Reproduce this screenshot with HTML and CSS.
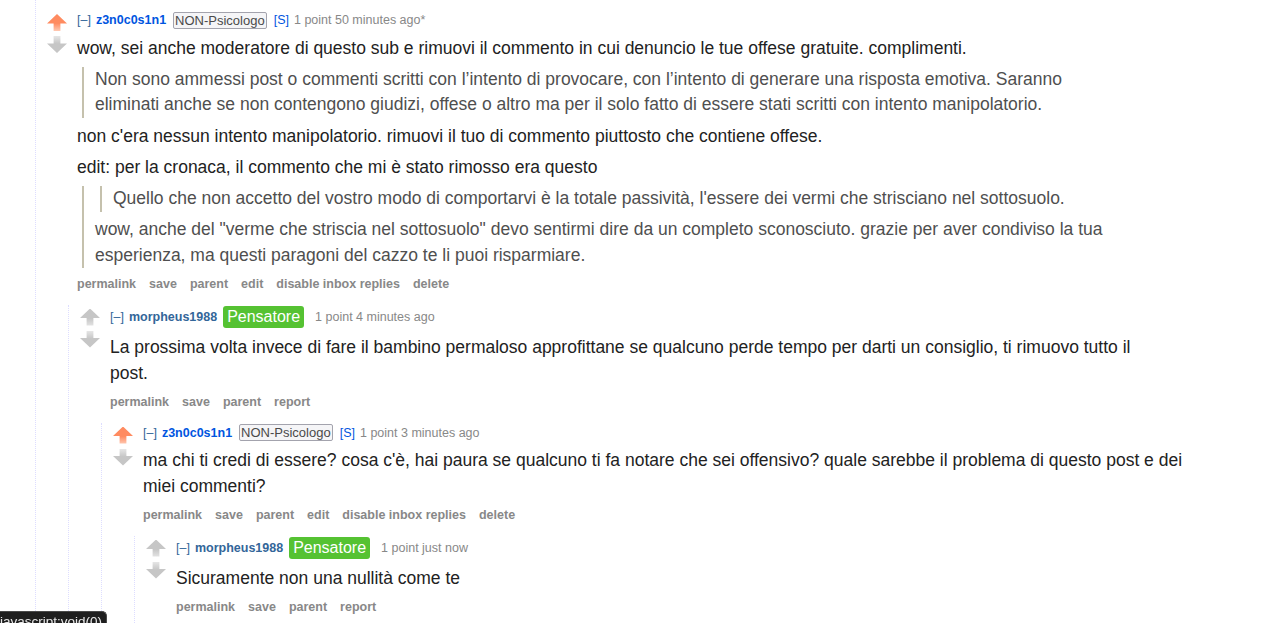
FILE: index.html
```html
<!DOCTYPE html>
<html lang="it">
<head>
<meta charset="utf-8">
<title>commenti</title>
<link rel="stylesheet" href="styles.css">
</head>
<body>
<div class="thread">
  <div class="comment">
    <div class="row">
      <div class="midcol"><div class="arrow up upmod"></div><div class="arrow down"></div></div>
      <div class="entry">
        <div class="tagline">
          <a class="expand">[–]</a>
          <a class="author submitter">z3n0c0s1n1</a>
          <span class="flair">NON-Psicologo</span>
          <a class="stag">[S]</a>
          <span class="meta">1 point 50 minutes ago*</span>
        </div>
        <div class="md">
          <p>wow, sei anche moderatore di questo sub e rimuovi il commento in cui denuncio le tue offese gratuite. complimenti.</p>
          <blockquote><p>Non sono ammessi post o commenti scritti con l’intento di provocare, con l’intento di generare una risposta emotiva. Saranno eliminati anche se non contengono giudizi, offese o altro ma per il solo fatto di essere stati scritti con intento manipolatorio.</p></blockquote>
          <p class="after-quote">non c'era nessun intento manipolatorio. rimuovi il tuo di commento piuttosto che contiene offese.</p>
          <p>edit: per la cronaca, il commento che mi è stato rimosso era questo</p>
          <blockquote>
            <blockquote><p>Quello che non accetto del vostro modo di comportarvi è la totale passività, l'essere dei vermi che strisciano nel sottosuolo.</p></blockquote>
            <p>wow, anche del "verme che striscia nel sottosuolo" devo sentirmi dire da un completo sconosciuto. grazie per aver condiviso la tua esperienza, ma questi paragoni del cazzo te li puoi risparmiare.</p>
          </blockquote>
        </div>
        <ul class="flat-list">
          <li>permalink</li><li>save</li><li>parent</li><li>edit</li><li>disable inbox replies</li><li>delete</li>
        </ul>
      </div>
    </div>
    <div class="child">
      <div class="comment">
        <div class="row">
          <div class="midcol"><div class="arrow up"></div><div class="arrow down"></div></div>
          <div class="entry">
            <div class="tagline tall">
              <a class="expand">[–]</a>
              <a class="author">morpheus1988</a>
              <span class="flair green">Pensatore</span>
              <span class="meta">1 point 4 minutes ago</span>
            </div>
            <div class="md">
              <p>La prossima volta invece di fare il bambino permaloso approfittane se qualcuno perde tempo per darti un consiglio, ti rimuovo tutto il post.</p>
            </div>
            <ul class="flat-list">
              <li>permalink</li><li>save</li><li>parent</li><li>report</li>
            </ul>
          </div>
        </div>
        <div class="child">
          <div class="comment">
            <div class="row">
              <div class="midcol"><div class="arrow up upmod"></div><div class="arrow down"></div></div>
              <div class="entry">
                <div class="tagline">
                  <a class="expand">[–]</a>
                  <a class="author submitter">z3n0c0s1n1</a>
                  <span class="flair">NON-Psicologo</span>
                  <a class="stag">[S]</a>
                  <span class="meta">1 point 3 minutes ago</span>
                </div>
                <div class="md">
                  <p>ma chi ti credi di essere? cosa c'è, hai paura se qualcuno ti fa notare che sei offensivo? quale sarebbe il problema di questo post e dei miei commenti?</p>
                </div>
                <ul class="flat-list">
                  <li>permalink</li><li>save</li><li>parent</li><li>edit</li><li>disable inbox replies</li><li>delete</li>
                </ul>
              </div>
            </div>
            <div class="child">
              <div class="comment">
                <div class="row">
                  <div class="midcol"><div class="arrow up"></div><div class="arrow down"></div></div>
                  <div class="entry">
                    <div class="tagline tall">
                      <a class="expand">[–]</a>
                      <a class="author">morpheus1988</a>
                      <span class="flair green">Pensatore</span>
                      <span class="meta">1 point just now</span>
                    </div>
                    <div class="md">
                      <p>Sicuramente non una nullità come te</p>
                    </div>
                    <ul class="flat-list">
                      <li>permalink</li><li>save</li><li>parent</li><li>report</li>
                    </ul>
                  </div>
                </div>
              </div>
            </div>
          </div>
        </div>
      </div>
    </div>
  </div>
</div>
<div class="status">javascript:void(0)</div>
</body>
</html>
```
FILE: styles.css
```css
html, body {
  margin: 0;
  padding: 0;
  background: #ffffff;
}
body {
  font-family: "Liberation Sans", Arial, Helvetica, sans-serif;
  color: #222222;
  overflow: hidden;
}
.thread {
  margin-left: 35px;
  border-left: 1px dotted #ddddff;
  padding-top: 10px;
  padding-bottom: 20px;
  min-height: 100vh;
  box-sizing: border-box;
}
.comment {
  padding-left: 11px;
}
.row {
  display: flex;
  gap: 10px;
}
.midcol {
  width: 20px;
  flex: none;
  padding-top: 4px;
  display: flex;
  flex-direction: column;
  gap: 5px;
}
.arrow {
  width: 20px;
  height: 17px;
}
.arrow.up {
  clip-path: polygon(50% 0, 100% 56%, 67% 56%, 67% 100%, 33% 100%, 33% 56%, 0 56%);
  background: linear-gradient(to bottom, #c6c6c6 0%, #c6c6c6 55%, #e4e4e4 100%);
}
.arrow.up.upmod {
  background: linear-gradient(to bottom, #ff8b60 0%, #ff8b60 55%, #ffc9b3 100%);
}
.arrow.down {
  clip-path: polygon(33% 0, 67% 0, 67% 44%, 100% 44%, 50% 100%, 0 44%, 33% 44%);
  background: linear-gradient(to bottom, #e6e6e6 0%, #c6c6c6 45%, #c6c6c6 100%);
}
.entry {
  flex: 1;
  min-width: 0;
}
.tagline {
  display: flex;
  align-items: center;
  gap: 5px;
  min-height: 20px;
  font-size: 12.5px;
  line-height: 16px;
  color: #888888;
}
.tagline.tall {
  min-height: 25px;
}
.expand {
  color: #336699;
}
.author {
  color: #336699;
  font-weight: bold;
}
.author.submitter,
.stag {
  color: #0055df;
}
.flair {
  margin: 0 2px;
  padding: 0 1px;
  border: 1px solid #a3a3ad;
  border-radius: 2px;
  background: #f5f5f7;
  color: #4a4a4a;
  font-size: 13px;
  line-height: 15px;
}
.flair.green {
  margin: 0 6px 0 1px;
  padding: 0 4px;
  border: none;
  border-radius: 3px;
  background: #55c232;
  color: #ffffff;
  font-size: 16px;
  line-height: 22px;
}
.md {
  max-width: 1056px;
  font-size: 17.5px;
  line-height: 25.5px;
}
.md p {
  margin: 5.5px 0;
}
.md p.after-quote {
  margin-top: 6.5px;
}
.md blockquote {
  margin: 5.5px 0 5.5px 5px;
  padding: 0 8px 0 11px;
  border-left: 2px solid #c5c1ad;
  color: #4f4f4f;
}
.flat-list {
  display: flex;
  gap: 13px;
  margin: 5px 0 0 0;
  padding: 0;
  list-style: none;
  font-size: 12.5px;
  line-height: 20px;
  font-weight: bold;
  color: #888888;
}
.child {
  margin-left: 21px;
  margin-top: 11px;
  border-left: 1px dotted #ddddff;
  padding-bottom: 10px;
}
.status {
  position: fixed;
  left: 0;
  bottom: -9px;
  height: 21px;
  padding: 0 4px 0 0;
  background: #1f1f1f;
  color: #e8e8e8;
  font-size: 13.5px;
  line-height: 20px;
  border-radius: 0 5px 0 0;
  border: 1px solid #4a4a4a;
  border-left: none;
  border-bottom: none;
  box-sizing: border-box;
}
```
